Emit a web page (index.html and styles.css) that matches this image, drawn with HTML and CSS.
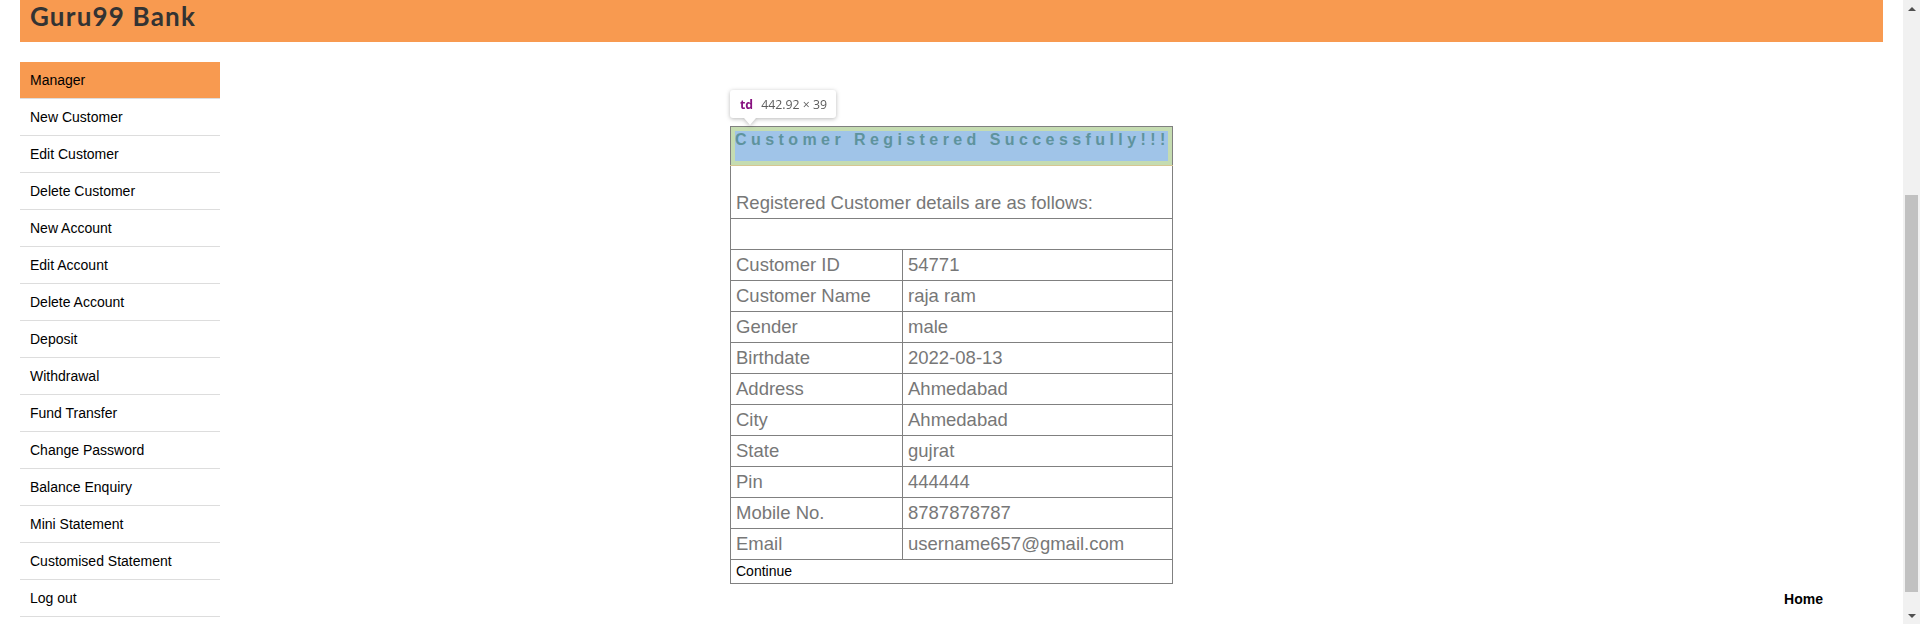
FILE: index.html
```html
<!DOCTYPE html>
<html lang="en">
<head>
<meta charset="utf-8">
<title>Guru99 Bank</title>
<link rel="stylesheet" href="styles.css">
</head>
<body>
<div class="page">
  <header class="topbar"><h2 class="brand">Guru99 Bank</h2></header>
  <div class="layout">
    <nav class="sidebar">
      <ul class="menu">
        <li class="menu-item active"><a>Manager</a></li>
        <li class="menu-item"><a>New Customer</a></li>
        <li class="menu-item"><a>Edit Customer</a></li>
        <li class="menu-item"><a>Delete Customer</a></li>
        <li class="menu-item"><a>New Account</a></li>
        <li class="menu-item"><a>Edit Account</a></li>
        <li class="menu-item"><a>Delete Account</a></li>
        <li class="menu-item"><a>Deposit</a></li>
        <li class="menu-item"><a>Withdrawal</a></li>
        <li class="menu-item"><a>Fund Transfer</a></li>
        <li class="menu-item"><a>Change Password</a></li>
        <li class="menu-item"><a>Balance Enquiry</a></li>
        <li class="menu-item"><a>Mini Statement</a></li>
        <li class="menu-item"><a>Customised Statement</a></li>
        <li class="menu-item"><a>Log out</a></li>
      </ul>
    </nav>
    <main class="content">
      <div class="table-wrap">
        <div class="inspect-tip"><span class="tip-tag">td</span><span class="tip-size">442.92 × 39</span></div>
        <table class="details">
          <colgroup><col class="col-label"><col class="col-value"></colgroup>
          <tr><td colspan="2" class="heading-cell"><p class="heading3">Customer Registered Successfully!!!</p></td></tr>
          <tr><td colspan="2" class="intro-cell">Registered Customer details are as follows:</td></tr>
          <tr><td colspan="2">&nbsp;</td></tr>
          <tr><td>Customer ID</td><td>54771</td></tr>
          <tr><td>Customer Name</td><td>raja ram</td></tr>
          <tr><td>Gender</td><td>male</td></tr>
          <tr><td>Birthdate</td><td>2022-08-13</td></tr>
          <tr><td>Address</td><td>Ahmedabad</td></tr>
          <tr><td>City</td><td>Ahmedabad</td></tr>
          <tr><td>State</td><td>gujrat</td></tr>
          <tr><td>Pin</td><td>444444</td></tr>
          <tr><td>Mobile No.</td><td>8787878787</td></tr>
          <tr><td>Email</td><td>username657@gmail.com</td></tr>
          <tr><td colspan="2" class="continue-cell"><a>Continue</a></td></tr>
        </table>
      </div>
      <a class="home-link">Home</a>
    </main>
  </div>
</div>
<div class="scrollbar">
  <div class="sb-arrow sb-up"></div>
  <div class="sb-track"><div class="sb-thumb"></div></div>
  <div class="sb-arrow sb-down"></div>
</div>
</body>
</html>
```

FILE: styles.css
```css
* { box-sizing: border-box; }
html, body { margin: 0; height: 624px; overflow: hidden; }
body {
  display: flex;
  font-family: "Liberation Sans", Arial, sans-serif;
  background: #fff;
  color: #000;
}
.page { flex: 1; min-width: 0; padding: 0 20px; }

.topbar { height: 42px; background: #f89a50; padding-left: 10px; }
.brand {
  margin: 0;
  font-family: Lato, "Open Sans", sans-serif;
  font-weight: 700;
  font-size: 26px;
  letter-spacing: 1.2px;
  line-height: 32px;
  color: #333;
}

.layout { display: flex; margin-top: 20px; }
.sidebar { width: 200px; flex: none; }
.menu { list-style: none; margin: 0; padding: 0; }
.menu-item a {
  display: block;
  height: 37px;
  line-height: 36px;
  padding: 0 10px;
  border-bottom: 1px solid #ddd;
  font-size: 14px;
  color: #000;
  text-decoration: none;
}
.menu-item.active a { background: #f89a50; }

.content { flex: 1; display: flex; flex-direction: column; }
.table-wrap { position: relative; margin-top: 64px; margin-left: 510px; width: 443px; }

.details {
  border-collapse: collapse;
  width: 443px;
  table-layout: fixed;
  font-size: 18.5px;
  color: #777;
}
.details td {
  border: 1px solid #808080;
  padding: 4px 5px;
  line-height: 22px;
  white-space: nowrap;
}
.col-label { width: 172px; }

.details td.heading-cell {
  padding: 4px;
  background: linear-gradient(#a0c4e8, #a0c4e8) content-box, #c5dcb1;
  border-bottom-color: #d6c692;
}
.heading3 {
  margin: 0;
  height: 30px;
  font-size: 16px;
  font-weight: 700;
  letter-spacing: 4.42px;
  line-height: 18px;
  color: #5e939d;
}
.details td.intro-cell { padding: 26px 5px 4px; }
.details td.continue-cell { font-size: 14px; line-height: 15px; color: #000; }

.home-link {
  align-self: flex-end;
  margin: 7px 60px 0 0;
  font-weight: 700;
  font-size: 14px;
  line-height: 16px;
  color: #000;
}

.inspect-tip {
  position: absolute;
  left: 0;
  top: -36px;
  height: 28px;
  padding: 0 9px 0 10px;
  display: flex;
  align-items: center;
  gap: 8px;
  background: #fff;
  border-radius: 3px;
  filter: drop-shadow(0 1px 2px rgba(0,0,0,.28));
  font-family: "Open Sans", "Noto Sans", sans-serif;
  font-size: 12.3px;
  white-space: nowrap;
}
.inspect-tip::after {
  content: "";
  position: absolute;
  left: 14px;
  top: 100%;
  border-left: 6px solid transparent;
  border-right: 6px solid transparent;
  border-top: 7px solid #fff;
}
.tip-tag { color: #881280; font-weight: 700; }
.tip-size { color: #5c5c5c; }

.scrollbar {
  width: 17px;
  flex: none;
  background: #f1f1f1;
  display: flex;
  flex-direction: column;
}
.sb-arrow { height: 17px; display: flex; align-items: center; justify-content: center; }
.sb-arrow::before {
  content: "";
  border-left: 4px solid transparent;
  border-right: 4px solid transparent;
}
.sb-up::before { border-bottom: 4px solid #505050; }
.sb-down::before { border-top: 4px solid #505050; }
.sb-track { flex: 1; padding: 0 2px; }
.sb-thumb { margin-top: 178px; height: 397px; background: #c1c1c1; }
```
